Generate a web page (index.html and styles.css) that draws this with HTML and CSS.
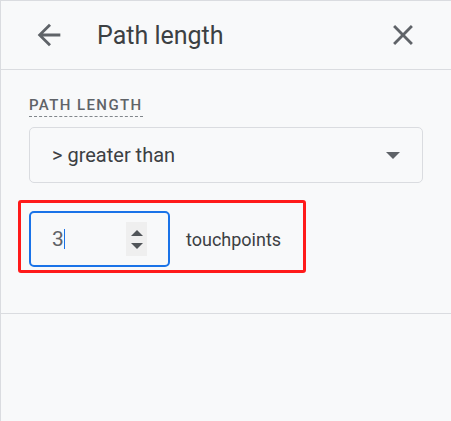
FILE: index.html
```html
<!DOCTYPE html>
<html lang="en">
<head>
    <meta charset="UTF-8">
    <meta name="viewport" content="width=device-width, initial-scale=1.0">
    <title>Path length</title>
    <link rel="stylesheet" href="styles.css">
</head>
<body>

<div class="panel">
    <div class="header">
        <svg class="icon" viewBox="0 0 24 24"><path d="M20 11H7.83l5.59-5.59L12 4l-8 8 8 8 1.41-1.41L7.83 13H20v-2z"/></svg>
        <h1>Path length</h1>
        <svg class="icon close" viewBox="0 0 24 24"><path d="M19 6.41L17.59 5 12 10.59 6.41 5 5 6.41 10.59 12 5 17.59 6.41 19 12 13.41 17.59 19 19 17.59 13.41 12z"/></svg>
    </div>

    <div class="section">
        <span class="label">Path length</span>
        <div class="select">
            <span>&gt; greater than</span>
            <span class="caret-down"></span>
        </div>

        <div class="highlight">
            <div class="number-input">
                <span class="value">3</span><span class="cursor"></span>
                <div class="spinner">
                    <span class="up"></span>
                    <span class="down"></span>
                </div>
            </div>
            <span class="unit">touchpoints</span>
        </div>
    </div>
</div>

</body>
</html>
```

FILE: styles.css
```css
body {
    margin: 0;
    background-color: #f8f9fa;
    font-family: Roboto, "Liberation Sans", Arial, sans-serif;
}
.panel {
    height: 421px;
    box-sizing: border-box;
    border-left: 1px solid #dadce0;
    border-top: 1px solid #dadce0;
}
.header {
    display: flex;
    align-items: center;
    height: 68px;
    padding: 0 31px 0 31px;
    border-bottom: 1px solid #dadce0;
}
.icon {
    width: 34px;
    height: 34px;
    fill: #5f6368;
    flex-shrink: 0;
}
.close {
    margin-left: auto;
}
h1 {
    margin: 0 0 0 31px;
    font-size: 25px;
    font-weight: 400;
    color: #3c4043;
}
.section {
    padding: 25px 28px 40px 28px;
    border-bottom: 1px solid #dadce0;
}
.label {
    display: inline-block;
    font-size: 15px;
    font-weight: 500;
    letter-spacing: 1.4px;
    text-transform: uppercase;
    color: #5f6368;
    padding-bottom: 2px;
    border-bottom: 1px dashed #80868b;
}
.select {
    display: flex;
    align-items: center;
    justify-content: space-between;
    height: 56px;
    box-sizing: border-box;
    margin-top: 10px;
    padding: 0 22px 0 22px;
    border: 1px solid #dadce0;
    border-radius: 5px;
    font-size: 20px;
    color: #3c4043;
}
.caret-down {
    width: 0;
    height: 0;
    border-left: 7px solid transparent;
    border-right: 7px solid transparent;
    border-top: 7px solid #5f6368;
}
.highlight {
    display: flex;
    align-items: center;
    gap: 16px;
    width: 288px;
    box-sizing: border-box;
    margin: 17px 0 0 -11px;
    padding: 8px 8px 3px 8px;
    border: 3px solid #ff1a1a;
    border-radius: 3px;
}
.number-input {
    display: flex;
    align-items: center;
    width: 141px;
    height: 56px;
    box-sizing: border-box;
    padding: 0 21px 0 21px;
    border: 2px solid #1a73e8;
    border-radius: 5px;
    font-size: 21px;
    color: #5f6368;
}
.cursor {
    width: 1px;
    height: 20px;
    background-color: #1a73e8;
}
.spinner {
    display: flex;
    flex-direction: column;
    align-items: center;
    justify-content: center;
    gap: 7px;
    width: 21px;
    height: 34px;
    margin-left: auto;
    background-color: #efefef;
}
.spinner .up,
.spinner .down {
    width: 0;
    height: 0;
    border-left: 6px solid transparent;
    border-right: 6px solid transparent;
}
.spinner .up {
    border-bottom: 6px solid #505458;
}
.spinner .down {
    border-top: 6px solid #505458;
}
.unit {
    font-size: 18px;
    color: #3c4043;
}
```
